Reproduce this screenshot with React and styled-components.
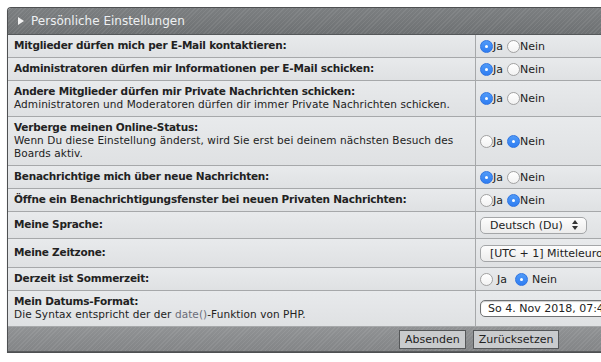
import React from 'react';
import styled, { createGlobalStyle } from 'styled-components';

const Global = createGlobalStyle`
  html, body {
    margin: 0;
    background: #fff;
    overflow: hidden;
  }
  body {
    padding: 7px 0 0 7px;
    font-family: 'DejaVu Sans', 'Liberation Sans', sans-serif;
    color: #222;
  }
`;

const stripes = `repeating-linear-gradient(135deg, rgba(255,255,255,0.07) 0 1px, rgba(0,0,0,0) 1px 3px)`;

const Panel = styled.form`
  width: 640px;
  border: 1px solid #4e5052;
  border-right: none;
  border-radius: 4px 0 0 0;
  box-shadow: 0 1px 1px rgba(0,0,0,0.25);
`;

const Header = styled.div`
  display: flex;
  align-items: center;
  gap: 7px;
  height: 26px;
  padding-left: 10px;
  border-radius: 3px 0 0 0;
  background: ${stripes}, linear-gradient(#7c7f81, #6e7173);
  border-bottom: 1px solid #55585a;
  color: #eef0f2;
  font-size: 12px;
`;

const Arrow = styled.span`
  width: 0;
  height: 0;
  border-top: 4px solid transparent;
  border-bottom: 4px solid transparent;
  border-left: 6px solid #f2f2f2;
`;

const Row = styled.div`
  display: grid;
  grid-template-columns: 468px 1fr;
  min-height: ${p => p.$min || 0}px;
  background: linear-gradient(#e8eaec, #dfe1e3);
  border-bottom: 1px solid #a6a8aa;
`;

const Label = styled.div`
  padding: 4px 6px 5px;
  font-size: 10.5px;
  line-height: 13px;
  border-right: 1px solid #a6a8aa;
  display: flex;
  flex-direction: column;
  justify-content: center;
`;

const Title = styled.span`
  font-weight: bold;
  letter-spacing: -0.22px;
`;

const Explain = styled.span`
  font-weight: normal;
  letter-spacing: 0.08px;
`;

const Code = styled.span`
  color: #6a6c78;
`;

const Field = styled.div`
  display: flex;
  align-items: center;
  padding: 0 4px;
  font-size: 11px;
  line-height: 13px;
`;

const Choice = styled.label`
  display: flex;
  align-items: center;
  gap: ${p => (p.$spaced ? 4 : 0)}px;
  margin-right: ${p => (p.$spaced ? 8 : 4)}px;
`;

const Dot = styled.span`
  width: 13px;
  height: 13px;
  box-sizing: border-box;
  border-radius: 50%;
  display: flex;
  align-items: center;
  justify-content: center;
  background: ${p => (p.$on ? 'linear-gradient(#4f9af8, #2f7df2)' : 'linear-gradient(#fff, #f2f2f2)')};
  border: 1px solid ${p => (p.$on ? '#2f74e0' : '#a2a2a2')};
  &::after {
    content: '';
    width: 3px;
    height: 3px;
    border-radius: 50%;
    background: #fff;
    display: ${p => (p.$on ? 'block' : 'none')};
  }
`;

const Select = styled.div`
  display: flex;
  align-items: center;
  height: 17px;
  width: ${p => p.$w}px;
  padding: 0 8px 0 9px;
  box-sizing: border-box;
  border: 1px solid #a4a6a8;
  border-radius: 5px;
  background: linear-gradient(#fdfdfd, #ececec);
  white-space: nowrap;
  overflow: hidden;
  font-size: 11px;
  justify-content: space-between;
`;

const Updown = styled.svg`
  flex: none;
`;

const Input = styled.div`
  height: 17px;
  width: 200px;
  padding: 0 7px;
  box-sizing: border-box;
  display: flex;
  align-items: center;
  border: 1px solid #6f7173;
  border-radius: 5px;
  background: #fff;
  font-size: 11px;
  white-space: nowrap;
  box-shadow: inset 0 1px 1px rgba(0,0,0,0.2);
`;

const Footer = styled.div`
  display: flex;
  align-items: center;
  gap: 7px;
  height: 24px;
  padding-left: 391px;
  background: ${stripes}, linear-gradient(#909294, #838587);
  border-bottom: 1px solid #5a5c5e;
`;

const Button = styled.button`
  height: 19px;
  padding: 0 5px;
  font-family: inherit;
  font-size: 11px;
  color: #222;
  background: #c9cbcd;
  border: 1px solid #555759;
  border-radius: 0;
`;

const YesNo = ({ yes, spaced }) => (
  <Field>
    <Choice $spaced={spaced}><Dot $on={yes} />Ja</Choice>
    <Choice $spaced={spaced}><Dot $on={!yes} />Nein</Choice>
  </Field>
);

const rows = [
  { t: 'Mitglieder dürfen mich per E-Mail kontaktieren:', yes: true },
  { t: 'Administratoren dürfen mir Informationen per E-Mail schicken:', yes: true },
  {
    t: 'Andere Mitglieder dürfen mir Private Nachrichten schicken:',
    e: 'Administratoren und Moderatoren dürfen dir immer Private Nachrichten schicken.',
    yes: true,
  },
  {
    t: 'Verberge meinen Online-Status:',
    e: 'Wenn Du diese Einstellung änderst, wird Sie erst bei deinem nächsten Besuch des Boards aktiv.',
    yes: false,
  },
  { t: 'Benachrichtige mich über neue Nachrichten:', yes: true },
  { t: 'Öffne ein Benachrichtigungsfenster bei neuen Privaten Nachrichten:', yes: false },
];

const UpDownIcon = () => (
  <Updown width="6" height="10" viewBox="0 0 6 10">
    <path d="M0 4 L3 0 L6 4 Z M0 6 L3 10 L6 6 Z" fill="#333" />
  </Updown>
);

export default function App() {
  return (
    <>
      <Global />
      <Panel>
        <Header>
          <Arrow />
          Persönliche Einstellungen
        </Header>
        {rows.map(r => (
          <Row key={r.t}>
            <Label>
              <Title>{r.t}</Title>
              {r.e && <Explain>{r.e}</Explain>}
            </Label>
            <YesNo yes={r.yes} />
          </Row>
        ))}
        <Row $min={26}>
          <Label><Title>Meine Sprache:</Title></Label>
          <Field>
            <Select $w={107}>Deutsch (Du)<UpDownIcon /></Select>
          </Field>
        </Row>
        <Row $min={28}>
          <Label><Title>Meine Zeitzone:</Title></Label>
          <Field>
            <Select $w={260}>[UTC + 1] Mitteleuropäische Zeit<UpDownIcon /></Select>
          </Field>
        </Row>
        <Row>
          <Label><Title>Derzeit ist Sommerzeit:</Title></Label>
          <YesNo yes={false} spaced />
        </Row>
        <Row>
          <Label>
            <Title>Mein Datums-Format:</Title>
            <Explain>Die Syntax entspricht der der <Code>date()</Code>-Funktion von PHP.</Explain>
          </Label>
          <Field>
            <Input>So 4. Nov 2018, 07:45</Input>
          </Field>
        </Row>
        <Footer>
          <Button type="button">Absenden</Button>
          <Button type="button">Zurücksetzen</Button>
        </Footer>
      </Panel>
    </>
  );
}
